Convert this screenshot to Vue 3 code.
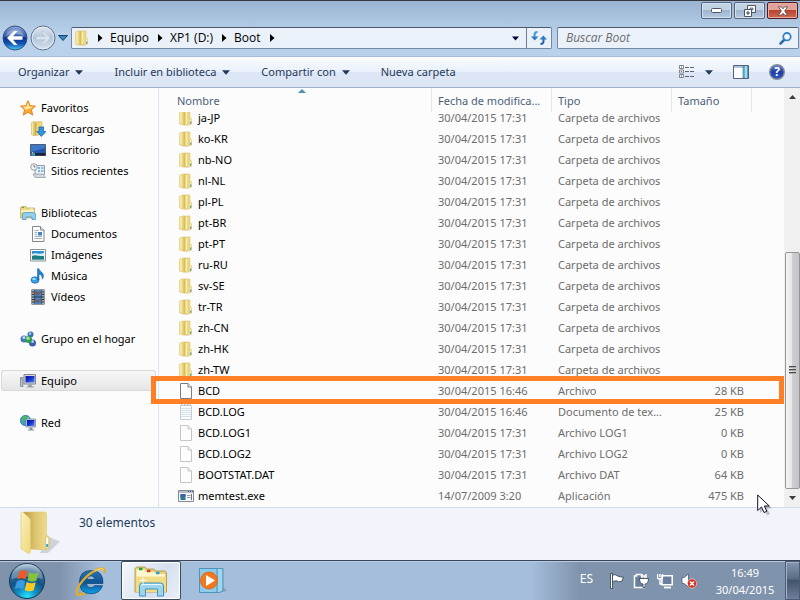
<script setup>
const menu = [
  { label: 'Organizar', drop: true },
  { label: 'Incluir en biblioteca', drop: true },
  { label: 'Compartir con', drop: true },
  { label: 'Nueva carpeta', drop: false },
]
const crumbs = ['Equipo', 'XP1 (D:)', 'Boot']
const groups = [
  { label: 'Favoritos', icon: 'star', items: [
    { label: 'Descargas', icon: 'downloads' },
    { label: 'Escritorio', icon: 'desktop' },
    { label: 'Sitios recientes', icon: 'recent' },
  ] },
  { label: 'Bibliotecas', icon: 'libraries', items: [
    { label: 'Documentos', icon: 'document' },
    { label: 'Imágenes', icon: 'pictures' },
    { label: 'Música', icon: 'music' },
    { label: 'Vídeos', icon: 'video' },
  ] },
  { label: 'Grupo en el hogar', icon: 'homegroup', items: [] },
  { label: 'Equipo', icon: 'computer', items: [], selected: true },
  { label: 'Red', icon: 'network', items: [] },
]
const folders = ['ja-JP', 'ko-KR', 'nb-NO', 'nl-NL', 'pl-PL', 'pt-BR', 'pt-PT', 'ru-RU', 'sv-SE', 'tr-TR', 'zh-CN', 'zh-HK', 'zh-TW']
const rows = [
  ...folders.map((name) => ({ name, icon: 'folder', date: '30/04/2015 17:31', type: 'Carpeta de archivos', size: '' })),
  { name: 'BCD', icon: 'file', solid: true, date: '30/04/2015 16:46', type: 'Archivo', size: '28 KB' },
  { name: 'BCD.LOG', icon: 'textfile', date: '30/04/2015 16:46', type: 'Documento de tex...', size: '25 KB' },
  { name: 'BCD.LOG1', icon: 'file', date: '30/04/2015 17:31', type: 'Archivo LOG1', size: '0 KB' },
  { name: 'BCD.LOG2', icon: 'file', date: '30/04/2015 17:31', type: 'Archivo LOG2', size: '0 KB' },
  { name: 'BOOTSTAT.DAT', icon: 'file', date: '30/04/2015 17:31', type: 'Archivo DAT', size: '64 KB' },
  { name: 'memtest.exe', icon: 'exe', date: '14/07/2009 3:20', type: 'Aplicación', size: '475 KB' },
]
</script>

<template>
  <div class="screen">
    <svg class="sprite" aria-hidden="true">
      <defs>
        <linearGradient id="gFolder" x1="0" x2="1" y1="0" y2="0">
          <stop offset="0" stop-color="#f8eca8" /><stop offset="0.5" stop-color="#e9d175" /><stop offset="1" stop-color="#f3df88" />
        </linearGradient>
        <linearGradient id="gPage" x1="0" x2="1" y1="0" y2="0">
          <stop offset="0" stop-color="#b8923f" /><stop offset="0.45" stop-color="#dcc26c" /><stop offset="1" stop-color="#f3e196" />
        </linearGradient>
        <linearGradient id="gFlap" x1="0" x2="1" y1="0" y2="1">
          <stop offset="0" stop-color="#fbf1bd" /><stop offset="1" stop-color="#efd678" />
        </linearGradient>
        <linearGradient id="gScreen" x1="0" x2="1" y1="0" y2="1">
          <stop offset="0" stop-color="#0710a0" /><stop offset="0.5" stop-color="#1632d0" /><stop offset="1" stop-color="#5e86ee" />
        </linearGradient>
        <linearGradient id="gBack" x1="0" x2="0" y1="0" y2="1">
          <stop offset="0" stop-color="#8fa9d8" /><stop offset="0.45" stop-color="#3259ad" /><stop offset="0.5" stop-color="#0b2f8c" /><stop offset="0.75" stop-color="#1457b8" /><stop offset="1" stop-color="#4fd0f8" />
        </linearGradient>
        <linearGradient id="gFwd" x1="0" x2="0" y1="0" y2="1">
          <stop offset="0" stop-color="#dfe7f1" /><stop offset="0.5" stop-color="#b4c5da" /><stop offset="1" stop-color="#d5e2f0" />
        </linearGradient>
        <radialGradient id="gOrb" cx="0.5" cy="0.95" r="0.9">
          <stop offset="0" stop-color="#25e6ff" /><stop offset="0.3" stop-color="#118fc4" /><stop offset="0.6" stop-color="#155487" /><stop offset="0.85" stop-color="#3c6a92" /><stop offset="1" stop-color="#8fb0c8" />
        </radialGradient>
        <linearGradient id="gIe" x1="0" x2="0" y1="0" y2="1">
          <stop offset="0" stop-color="#2a72b4" /><stop offset="0.5" stop-color="#0d5596" /><stop offset="1" stop-color="#0aa0e8" />
        </linearGradient>
        <linearGradient id="gHelp" x1="0" x2="0" y1="0" y2="1">
          <stop offset="0" stop-color="#5c86d8" /><stop offset="0.5" stop-color="#1b3ea8" /><stop offset="1" stop-color="#2f57c2" />
        </linearGradient>
      </defs>
      <symbol id="i-folder" viewBox="0 0 16 16">
        <path d="M1.500 2.300 4.500 1H12v6.500l1.500 1.500v5l-4 1.300-5-.3-3-1.200z" fill="#e9d47f" stroke="#d8c070" stroke-width=".6" />
        <path d="M1.800 2.500 4.500 1.500v12.800l-2.700-1z" fill="#f5e9a6" />
        <path d="M4.500 1.500h2v12.800l-2 .3z" fill="#e3ca70" />
        <path d="M6.500 1.500h1v13h-1z" fill="#c9ab4c" />
        <path d="M7.500 2.300 9.500 1.200v12.600l-2 1z" fill="#f8eead" />
        <path d="M9.500 1.300H12v6.500l1.300 1.500v4.700l-3.800 1z" fill="#ead480" />
        <path d="M12.600 9.500v2" stroke="#fff8d8" stroke-width="1.200" /><path d="M12.700 11.500v2.300" stroke="#4aa6d8" stroke-width="1.200" />
      </symbol>
      <symbol id="i-file" viewBox="0 0 16 16">
        <path d="M2.500.5h7.500l3.500 3.500v11.500h-11z" fill="#fdfdfd" stroke="currentColor" />
        <path d="M10 .5V4h3.500" fill="#eee" stroke="currentColor" />
      </symbol>
      <symbol id="i-textfile" viewBox="0 0 16 16">
        <path d="M2.500 1.500h11v14h-11z" fill="#fafcfe" stroke="#c9ced3" />
        <path d="M3 4.500h10M3 6.500h10M3 8.500h10M3 10.500h10M3 12.500h10" stroke="#d3e3ee" />
        <path d="M3 1h10" stroke="#bcc4cb" stroke-dasharray="1.500 1.500" stroke-width="2" />
      </symbol>
      <symbol id="i-exe" viewBox="0 0 16 16">
        <path d="M.5 2.500h15v11H.5z" fill="#f6f6f8" stroke="#858b95" />
        <path d="M1 4h14" stroke="#b7bdc8" stroke-width="2" />
        <path d="M10 3.500h1M12 3.500h1M14 3.500h1" stroke="#4d5a78" />
        <path d="M2.500 6h5v6h-5z" fill="#2c7c88" /><path d="M2.500 6h5v2.500l-5 1z" fill="#3e62a6" />
        <path d="M9 7.500h3.500M9 9.500h3.500" stroke="#9aa0aa" /><path d="M13.500 6v6" stroke="#6e7684" />
      </symbol>
      <symbol id="i-star" viewBox="0 0 16 16">
        <path d="M8 .7l2.200 4.900 5.300.5-4 3.600 1.200 5.400L8 12.300l-4.700 2.800 1.200-5.400-4-3.600 5.300-.5z" fill="#f9a834" stroke="#dd7215" stroke-width=".8" />
        <path d="M8 2.500l1.500 4 4 .3-3.500 1.600-5 1.600.5-1L2.500 6.800l3.800-.3z" fill="#ffe49a" />
      </symbol>
      <symbol id="i-downloads" viewBox="0 0 16 16">
        <path d="M1.500 1.500 4 .5v14.500l-2.500-1.500z" fill="#f7eba5" stroke="#cdb154" stroke-width=".6" />
        <path d="M4 .8h8v12l-6 2-2-.5z" fill="url(#gFolder)" stroke="#c9ad50" stroke-width=".6" />
        <path d="M4.500 1.500v13l2-.7v-12z" fill="#cdaf52" />
        <path d="M9 6h4.500v4.500H16L11.300 15.500 6.800 10.500H9z" fill="#3194dc" stroke="#0d5fa6" stroke-width=".7" />
      </symbol>
      <symbol id="i-desktop" viewBox="0 0 16 16">
        <path d="M.5 2.500h15v11H.5z" fill="#2454ac" stroke="#4a5a78" />
        <path d="M1 3h14v3L1 10z" fill="#3b78ca" />
        <path d="M5 11h10.500v2.500H5z" fill="#1c2536" />
        <path d="M1.500 11h3.500v2.500H1.500z" fill="#2fa7c8" />
        <path d="M2 10h1.200v1.200H2z" fill="#f0b43e" />
      </symbol>
      <symbol id="i-recent" viewBox="0 0 16 16">
        <path d="M5 2.500h9.500v9H5z" fill="#edf1f6" stroke="#929ba6" />
        <path d="M3 11h10l2.500 3.500H5z" fill="#d2d8df" stroke="#9097a0" stroke-width=".7" />
        <path d="M8 5h2M8 8h2" stroke="#5c9fd6" stroke-width="1.500" /><path d="M11 5h2.500M11 8h2.500" stroke="#86bce8" stroke-width="2" />
        <circle cx="4" cy="4" r="3.300" fill="#f0f2f4" stroke="#979ea6" /><path d="M4 2v2h1.500" fill="none" stroke="#666" stroke-width=".8" />
      </symbol>
      <symbol id="i-libraries" viewBox="0 0 16 16">
        <path d="M.5 13V2.500L2 1.500h4l1 1.500h7.500v10z" fill="#ecd67f" stroke="#bea04b" stroke-width=".7" />
        <path d="M1 5h13v2H1z" fill="#fbf2bd" /><path d="M2 2.500h2" stroke="#5dae4c" /><path d="M9.500 4h3.500" stroke="#f2faff" />
        <path d="M2.500 14.500V10a2.500 2.500 0 0 1 2.500-2.500h7.500A2.500 2.500 0 0 1 15.500 10v4.500h-3.500V12h-6v2.500z" fill="#94cfed" stroke="#4c9bc6" stroke-width=".8" />
      </symbol>
      <symbol id="i-document" viewBox="0 0 16 16">
        <path d="M2.500.5h8l3.500 3.500v11.500H2.500z" fill="#fdfdfd" stroke="#82898f" />
        <path d="M10.500.5V4H14" fill="#e4e7ea" stroke="#82898f" />
        <path d="M4.500 4.500h4M4.500 6.500h2.500M4.500 8.500h2.500M4.500 10.500h7.500M4.500 12.500h7.500" stroke="#a2acba" />
        <path d="M8 6h4v3.500H8z" fill="#4584c4" />
      </symbol>
      <symbol id="i-pictures" viewBox="0 0 16 16">
        <path d="M.5 2.500h15v11.500H.5z" fill="#fff" stroke="#8a8f95" />
        <path d="M2 4h12v8.500H2z" fill="#2f8fd0" /><path d="M2 7c4-2 6 1 12-1v3H2z" fill="#d7eff7" />
        <path d="M2 9c4-2 8 1 12 0v3.500H2z" fill="#1e7f83" />
      </symbol>
      <symbol id="i-music" viewBox="0 0 16 16">
        <ellipse cx="5" cy="12" rx="4" ry="3.200" fill="#3a9fe4" stroke="#1369ad" stroke-width=".7" />
        <path d="M7.500 12V.8h1.500c.5 2.800 4.500 3.500 4.500 7 0 1.500-.7 2.700-1.500 3.400.7-2.800-.7-4.500-3-5V12z" fill="#2080cb" stroke="#125f9f" stroke-width=".5" />
        <ellipse cx="4" cy="11" rx="1.800" ry="1" fill="#a9dcfa" />
      </symbol>
      <symbol id="i-video" viewBox="0 0 16 16">
        <path d="M1.500.5h13v15h-13z" fill="#2b323b" />
        <path d="M4.500 1h7v6.500h-7zM4.500 8.500h7V15h-7z" fill="#3f8ed2" />
        <path d="M4.500 1 8 3l3.500-1v2L8 7 4.500 5zM4.500 9 8 11l3.500-1.500v2L8 14.500l-3.500-2z" fill="#8d4a3e" opacity=".7" />
        <path d="M3 1v14M13 1v14" stroke="#e9eef2" stroke-width="1.300" stroke-dasharray="1.500 1" />
      </symbol>
      <symbol id="i-homegroup" viewBox="0 0 16 16">
        <circle cx="4" cy="8" r="3.500" fill="#4b74c6" /><circle cx="10.500" cy="3.500" r="3" fill="#3f6cb8" /><circle cx="12.500" cy="12" r="3.500" fill="#3c5eb0" />
        <circle cx="4" cy="6.500" r="1.600" fill="#bdd4f2" /><circle cx="10" cy="2.700" r="1.400" fill="#8ccad2" /><circle cx="12.500" cy="10.500" r="1.500" fill="#b7ccee" />
        <circle cx="8.500" cy="8.500" r="3.500" fill="#2f9f4a" /><circle cx="8" cy="7.300" r="1.700" fill="#a2e29a" />
      </symbol>
      <symbol id="i-computer" viewBox="0 0 16 16">
        <path d="M.5 4.500h2.500v9H.5z" fill="#b9c0c5" stroke="#7d858b" stroke-width=".8" /><path d="M1 6h1.500" stroke="#50c050" />
        <path d="M4 1.500h11.500v9.500H4z" fill="#d5d9dd" stroke="#83898e" />
        <path d="M5.500 3h9v6.500h-9z" fill="url(#gScreen)" />
        <path d="M8 11.500h4v2H8zM6.500 13.500h7.500v1H6.500z" fill="#9aa2a8" />
      </symbol>
      <symbol id="i-network" viewBox="0 0 16 16">
        <circle cx="5.500" cy="5.500" r="5.200" fill="#3d9bd8" stroke="#1d5f9a" stroke-width=".6" />
        <path d="M2 2.500c2-2 4-1.500 5-1l-2 3-2 1.500 1 3-2-1.500z" fill="#4cbc4e" /><path d="M7 2l2.500 1-1 2z" fill="#a9e6ac" />
        <path d="M6 4h9.500v8H6z" fill="#d3dbe4" stroke="#7a8794" stroke-width=".8" /><path d="M7 5h7.500v6H7z" fill="url(#gScreen)" />
        <path d="M9.500 12.500h3v2h-3zM8 14.500h6v1H8z" fill="#87929c" />
      </symbol>
    </svg>

    <main class="window">
      <div class="frame">
        <div class="caption">
          <button class="cap" aria-label="Minimizar">
            <svg width="12" height="7"><rect x=".5" y="1.500" width="10" height="4" rx="1" fill="#fff" stroke="#4c5564" /></svg>
          </button>
          <button class="cap" aria-label="Restaurar">
            <svg width="14" height="12"><path d="M4.500.5h8v7h-8z" fill="#fff" stroke="#4c5564" /><path d="M7 3h3v2H7z" fill="#a9bbd2" stroke="#4c5564" stroke-width=".7" /><path d="M1.500 4.500h7v7h-7z" fill="#fff" stroke="#4c5564" /><path d="M4 7h2v2H4z" fill="#a9bbd2" stroke="#4c5564" /></svg>
          </button>
          <button class="cap close" aria-label="Cerrar">
            <svg width="12" height="10" viewBox="0 0 14 12"><path d="M1.500 1h3.500l2 2.300L9 1h3.500L9 6l3.500 5H9L7 8.700 5 11H1.500L5 6z" fill="#fff" stroke="#54454a" /></svg>
          </button>
        </div>
        <div class="navbar">
          <div class="nav">
            <button class="plain" aria-label="Atrás">
              <svg width="26" height="26" viewBox="0 0 26 26"><circle cx="13" cy="13" r="12" fill="url(#gBack)" stroke="#34507e" /><path d="M4 11a9.500 9.500 0 0 1 18 0q-9-4-18 0z" fill="#fff" opacity=".3" /><path d="M5 13 12 6h3.500L11 11.200H20.500v3.600H11L15.500 20H12z" fill="#fff" /></svg>
            </button>
            <button class="plain" aria-label="Adelante">
              <svg width="26" height="26" viewBox="0 0 26 26"><circle cx="13" cy="13" r="12" fill="url(#gFwd)" stroke="#60738c" /><circle cx="13" cy="13" r="10.800" fill="none" stroke="#e8eff7" opacity=".7" /><path d="M20.500 13 14 6.500h-3l4.300 4.800H6v3.400h9.300L11 19.500h3z" fill="#d9e3ee" stroke="#b3c2d3" stroke-width=".6" /></svg>
            </button>
            <button class="plain" aria-label="Páginas recientes">
              <svg width="10" height="6"><path d="M.5.500h9L5 5.500z" fill="#2f87bd" stroke="#1b3f70" /></svg>
            </button>
          </div>
          <div class="address">
            <svg class="ico" width="16" height="16"><use href="#i-folder" /></svg>
            <template v-for="c in crumbs" :key="c">
              <svg class="tri" width="5" height="8"><path d="M0 0v8l4.500-4z" fill="#000" /></svg>
              <button class="plain crumb">{{ c }}</button>
            </template>
            <svg class="tri" width="5" height="8"><path d="M0 0v8l4.500-4z" fill="#000" /></svg>
            <button class="plain addrdrop" aria-label="Ubicaciones anteriores"><svg width="8" height="5"><path d="M0 .5h7L3.500 4.500z" fill="#00003c" /></svg></button>
            <button class="plain refresh" aria-label="Actualizar">
              <svg width="16" height="14" viewBox="0 0 16 14"><path d="M6.500 1Q3.500 1 3.500 4V6" fill="none" stroke="#3f9ad8" stroke-width="2" /><path d="M0 5.500h7.500L3.700 9.500z" fill="#2f7cc6" /><path d="M9.500 13q3 0 3-3V8" fill="none" stroke="#2566a8" stroke-width="2" /><path d="M8.500 8.500H16L12.300 4.500z" fill="#2f7cc6" /></svg>
            </button>
          </div>
          <label class="search">
            <input type="text" placeholder="Buscar Boot" aria-label="Buscar Boot" />
            <svg width="13" height="13" viewBox="0 0 13 13"><path d="M1.500 11.500 5 8" stroke="#2c6cae" stroke-width="2.500" stroke-linecap="round" /><circle cx="8" cy="4.700" r="3.700" fill="#f3faff" stroke="#3581c4" stroke-width="1.800" /></svg>
          </label>
        </div>
      </div>

      <div class="toolbar">
        <button v-for="m in menu" :key="m.label" class="plain tool">
          {{ m.label }}
          <svg v-if="m.drop" width="8" height="5"><path d="M0 .3h8L4 4.800z" fill="#1e395b" /></svg>
        </button>
        <div class="right">
          <button class="plain view" aria-label="Cambiar la vista">
            <svg width="16" height="14" viewBox="0 0 16 14"><path d="M.5.500h4v3h-4zM.5 5h4v3h-4zM.5 9.500h4v3h-4z" fill="#fff" stroke="#7a8390" /><path d="M2 2h1M2 11h1" stroke="#556" /><path d="M2 6.500h1" stroke="#d33" /><path d="M6 2.500h4M11 2.500h4M6 6.500h4M11 6.500h4M6 11.500h4M11 11.500h4" stroke="#5a6472" /></svg>
            <svg width="8" height="5"><path d="M0 .3h8L4 4.800z" fill="#1e395b" /></svg>
          </button>
          <button class="plain" aria-label="Mostrar el panel de vista previa">
            <svg width="16" height="14" viewBox="0 0 16 14"><path d="M.5.500h15v13H.5z" fill="#fff" stroke="#4f6280" /><path d="M1 2h9" stroke="#b5c2d8" stroke-width="2" /><path d="M10 1h5v12h-5z" fill="#5bbbd8" stroke="#4f6280" stroke-width=".6" /><path d="M12 1h2v12h-2z" fill="#9be0ee" /></svg>
          </button>
          <button class="plain" aria-label="Obtener ayuda">
            <svg width="16" height="16" viewBox="0 0 16 16"><circle cx="8" cy="8" r="7.300" fill="url(#gHelp)" stroke="#8a8d92" stroke-width="1.400" /><text x="8" y="12" text-anchor="middle" class="q">?</text></svg>
          </button>
        </div>
      </div>

      <div class="content">
        <nav class="sidebar" aria-label="Panel de navegación">
          <ul v-for="g in groups" :key="g.label">
            <li :class="{ selected: g.selected }"><a href="#"><svg class="ico" width="16" height="16"><use :href="'#i-' + g.icon" /></svg>{{ g.label }}</a></li>
            <li v-for="i in g.items" :key="i.label" class="child"><a href="#"><svg class="ico" width="16" height="16"><use :href="'#i-' + i.icon" /></svg>{{ i.label }}</a></li>
          </ul>
        </nav>

        <table class="files">
          <thead>
            <tr class="cols">
              <th>Nombre<svg class="sort" width="8" height="4"><path d="M4 0l4 4H0z" fill="#4f8fb0" /></svg></th>
              <th>Fecha de modifica...</th>
              <th>Tipo</th>
              <th>Tamaño</th>
            </tr>
          </thead>
          <tbody>
            <tr v-for="r in rows" :key="r.name" class="cols">
              <td class="name"><svg class="ico" :class="{ solid: r.solid }" width="16" height="16"><use :href="'#i-' + r.icon" /></svg>{{ r.name }}</td>
              <td>{{ r.date }}</td>
              <td>{{ r.type }}</td>
              <td class="size">{{ r.size }}</td>
            </tr>
          </tbody>
        </table>

        <div class="scroll">
          <button class="plain" aria-label="Subir"><svg width="7" height="4"><path d="M3.500 0L7 4H0z" fill="#3c3c3c" /></svg></button>
          <div class="track"><div class="thumb"><i></i><i></i><i></i></div></div>
          <button class="plain" aria-label="Bajar"><svg width="7" height="4"><path d="M0 0h7L3.500 4z" fill="#3c3c3c" /></svg></button>
        </div>
        <div class="highlight"></div>
        <svg class="cursor" width="17" height="22" viewBox="0 0 17 22"><path d="M3 3v16l4-3.500 3 6 3-1.500-3-5.500h5z" fill="#000" opacity=".22" /><path d="M.7 1v15.500l3.800-3.500 2.500 5.500 2.800-1.200-2.500-5.300h5z" fill="#fff" stroke="#101428" /></svg>
      </div>

      <footer class="details">
        <svg width="42" height="46" viewBox="0 0 42 46">
          <path d="M20 42 28 42 40 30.500 29 26z" fill="#7d828c" opacity=".3" />
          <path d="M3 1H25q1.500 0 1.500 1.500V24l2.500 2.500V37l-5 2-15-1z" fill="url(#gPage)" stroke="#dcc677" stroke-width=".6" />
          <path d="M25.500 27q0-2 1.700-2t1.700 2v10l-3.400 1.300z" fill="#f6e8a8" stroke="#cfb45f" stroke-width=".6" />
          <path d="M27.200 27v6" stroke="#fff" stroke-width="1.800" /><path d="M27.200 33v3" stroke="#379fe0" stroke-width="1.800" />
          <path d="M1 2.500Q1 .5 3.500 1.500L9 6.500q1.500 1.500 1.500 3.500v31q-1 2.500-3.500.7L1 37.500z" fill="url(#gFlap)" stroke="#dfca7c" stroke-width=".7" />
        </svg>
        <span>30 elementos</span>
      </footer>
    </main>

    <div class="taskbar">
      <button class="plain start" aria-label="Iniciar">
        <svg width="38" height="38" viewBox="0 0 38 38">
          <circle cx="19" cy="19" r="17.500" fill="url(#gOrb)" stroke="#16354f" />
          <path d="M3.500 17a15.500 15.500 0 0 1 31 0q-15-5-31 0z" fill="#fff" opacity=".28" />
          <path d="M11.500 9.500q4-2.500 8 0l-2 8q-4-2.500-8.200 0z" fill="#ee5a26" />
          <path d="M21 10.300q4.500 2.700 9.500.3l-2 8q-4.500 2.200-9-.3z" fill="#86c23a" />
          <path d="M8.800 19.200q4.200-2.500 8.200 0l-2 8q-4-2.500-8.200 0z" fill="#3c9be0" />
          <path d="M18.700 20q4.500 2.500 9 .3l-2 8q-4.500 2.200-9-.3z" fill="#fcc822" />
        </svg>
      </button>
      <button class="plain app" aria-label="Internet Explorer">
        <svg width="34" height="34" viewBox="0 0 34 34">
          <path d="M29 19.500H12.500q.5 4.200 4.500 4.200 2.500 0 3.500-2h8q-2.500 8-11.500 8-11.500 0-11.500-11.500T17 6.500q12.500 0 12 13zM12.700 15.500h8q-.5-3.700-3.800-3.700-3.500 0-4.200 3.700z" fill="url(#gIe)" stroke="#0b3f73" stroke-width=".7" />
          <path d="M30.500 9c1.500-5-3-6-9-2.500C12 11 3 22 2.700 28c0 4 4 3.500 8 1" fill="none" stroke="#e7ab1e" stroke-width="2.200" />
          <path d="M30 6c-1-2-5-1.500-9 1" fill="none" stroke="#ffe27a" />
        </svg>
      </button>
      <button class="plain app active" aria-label="Explorador de Windows">
        <svg width="34" height="32" viewBox="0 0 34 32">
          <path d="M1 27V3.500L3 2h8l1.500 2H20l1.500 2H31l1.500 2v19z" fill="#e9d27b" stroke="#ad8f3f" stroke-width=".8" />
          <path d="M2.500 4.500h8L12 7h8l2 2h9V12H2.500z" fill="#fff8cf" />
          <path d="M5 4h3.500" stroke="#17a83a" stroke-width="2.500" /><path d="M13 6h3.500" stroke="#d33a22" stroke-width="2.500" /><path d="M22 8h3.500" stroke="#2d9fd8" stroke-width="2.500" />
          <path d="M2 11.500h30V27H2z" fill="#f1dc88" />
          <path d="M5.500 31V21q0-3 3-3h18q3 0 3 3v10h-6v-7h-12v7z" fill="#9cd6ee" stroke="#4293bb" />
          <path d="M7 21q0-1.500 2-1.500h17q2 0 2 1.500" fill="none" stroke="#e8f8ff" />
          <path d="M9 12v7M5.500 15.500h7" stroke="#fff" opacity=".9" />
        </svg>
      </button>
      <button class="plain app" aria-label="Reproductor de Windows Media">
        <svg width="32" height="28" viewBox="-3 0 32 28">
          <path d="M24 25l5-1-4-4z" fill="#56708f" opacity=".4" />
          <path d="M10 1.500h15v22l-3 2H10z" fill="#7ec2e2" stroke="#4f98c2" /><path d="M21 2v23M23 2v22" stroke="#c6e9f6" />
          <path d="M1.500 1.500h17.500v24H1.500z" fill="#8ecbe8" stroke="#4b94c0" />
          <circle cx="11" cy="13.500" r="8.500" fill="#f4771d" stroke="#d85a0c" stroke-width=".7" />
          <path d="M8 8v11l9-5.500z" fill="#fff" />
        </svg>
      </button>
      <div class="tray">
        <span class="lang">ES</span>
        <svg width="16" height="16" viewBox="0 0 16 16"><path d="M1.500.500h2v15h-2z" fill="#fff" stroke="#2c3b52" stroke-width=".8" /><path d="M3.500 2q3-1 5 1l6 1.500-2 4q-3 1-5-.8l-4 .8z" fill="#fff" stroke="#2c3b52" stroke-width=".8" /></svg>
        <svg width="16" height="16" viewBox="0 0 16 16"><path d="M3.500 1.500h5v1.500h3v11.500h-10V3h2z" fill="#6a7f9c" stroke="#fff" stroke-width="1.500" /><path d="M9 1v4M13 1v4" stroke="#fff" stroke-width="1.500" /><path d="M6.500 5.500h9q0 5-3.500 5.500v3.500h-2V11q-3.500-.5-3.500-5.500z" fill="#fff" stroke="#2c3b52" stroke-width=".8" /></svg>
        <svg width="16" height="16" viewBox="0 0 16 16"><path d="M5 2.800h10.200v9H5z" fill="#6a7f9c" stroke="#fff" stroke-width="1.500" /><path d="M7 14.500h7" stroke="#fff" stroke-width="1.800" /><path d="M.5 1v3.500q0 1.500 2.500 1.500v5h2M5.500 1v3.500Q5.500 6 3 6M3 1v3" fill="none" stroke="#fff" stroke-width="1.400" /></svg>
        <svg width="16" height="16" viewBox="0 0 16 16"><path d="M1 4.500h2L7.500 1v13L3 10.500H1z" fill="#fff" stroke="#4b5b72" stroke-width=".8" /><circle cx="11" cy="10.500" r="4.600" fill="#d92b1c" stroke="#fff" stroke-width=".5" /><path d="M9 8.500l4 4M13 8.500l-4 4" stroke="#fff" stroke-width="1.600" /></svg>
        <div class="clock"><span>16:49</span><span>30/04/2015</span></div>
      </div>
      <button class="plain peek" aria-label="Mostrar escritorio"></button>
    </div>
  </div>
</template>

<style>
body {
  margin: 0;
}
</style>

<style scoped>
.screen {
  display: flex;
  flex-direction: column;
  height: 100vh;
  overflow: hidden;
  font: 11px/20px "Noto Sans", "Open Sans", sans-serif;
  color: #000;
}
.sprite {
  position: absolute;
  width: 0;
  height: 0;
}
svg {
  flex: none;
  display: block;
}
.plain {
  border: 0;
  padding: 0;
  background: none;
  font: inherit;
  color: inherit;
  display: flex;
  align-items: center;
  justify-content: center;
}
.window {
  flex: 1;
  min-height: 0;
  display: flex;
  flex-direction: column;
}
.frame {
  border-top: 1px solid #36383e;
  padding-top: 1px;
  background: linear-gradient(#99b4d2, #b9d1ea 60%, #b9d1ea);
  border-bottom: 1px solid #a5bcd8;
}
.caption {
  display: flex;
  justify-content: flex-end;
  gap: 2px;
  padding: 0 2px;
  height: 23px;
}
.cap {
  width: 31px;
  height: 17px;
  padding: 0;
  display: flex;
  align-items: center;
  justify-content: center;
  border: 1px solid #56657b;
  border-radius: 2px;
  box-shadow: inset 0 0 0 1px #d3e0ef;
  background: linear-gradient(#c3d3e6 48%, #9fb5d0 50%, #b6cae1);
}
.cap.close {
  border-color: #4e1d24;
  box-shadow: inset 0 0 0 1px #e8aea4;
  background: linear-gradient(#e3a297 45%, #bb4430 50%, #cd6a50);
}
.navbar {
  display: flex;
  align-items: center;
  gap: 5px;
  padding: 0 1px 5px 2px;
}
.nav {
  display: flex;
  align-items: center;
  gap: 2px;
  width: 64px;
}
.address,
.search {
  display: flex;
  align-items: center;
  box-sizing: border-box;
  height: 22px;
  border: 1px solid #7288a3;
  border-top-color: #4b5a6b;
  border-radius: 2px;
  background: #eaf1f9;
  font: 12px/20px "Open Sans", "Noto Sans", sans-serif;
}
.address {
  flex: 1;
  padding-left: 2px;
}
.crumb {
  margin: 0 8px 0 7px;
}
.tri {
  margin-left: 1px;
}
.ico + .tri {
  margin-left: 8px;
}
.addrdrop {
  margin-left: auto;
  width: 20px;
}
.refresh {
  width: 25px;
  height: 20px;
  border-left: 1px solid #6f7f92;
}
.search {
  width: 242px;
  padding: 0 6px 0 8px;
}
.search input {
  flex: 1;
  min-width: 0;
  border: 0;
  padding: 0;
  outline: 0;
  background: none;
  font: italic 12px/20px "Open Sans", "Noto Sans", sans-serif;
}
.search input::placeholder {
  color: #6d6d6d;
  opacity: 1;
}
.toolbar {
  display: flex;
  align-items: center;
  gap: 31px;
  height: 30px;
  padding: 0 15px 0 18px;
  border-bottom: 1px solid #9fb0cd;
  background: linear-gradient(#fafcff, #eaf1fa 48%, #dce6f4 52%, #dce6f4);
  color: #1e395b;
}
.tool {
  gap: 6px;
}
.right {
  display: flex;
  align-items: center;
  gap: 20px;
  margin-left: auto;
}
.view {
  gap: 10px;
}
.q {
  font: bold 12px "Open Sans", sans-serif;
  fill: #fff;
}
.content {
  position: relative;
  flex: 1;
  min-height: 0;
  display: flex;
  background: #fcfcfc;
}
.sidebar {
  box-sizing: border-box;
  flex: none;
  width: 159px;
  padding: 9px 2px 0 1px;
  border-right: 1px solid #d6e5f5;
}
.sidebar ul {
  list-style: none;
  margin: 0 0 21px;
  padding: 0;
}
.sidebar a {
  display: flex;
  align-items: center;
  gap: 5px;
  height: 21px;
  padding-left: 19px;
  color: #000;
  text-decoration: none;
}
.sidebar .child a {
  padding-left: 29px;
}
.sidebar .selected {
  border-radius: 3px;
  box-shadow: inset 0 0 0 1px #d9d9d9;
  background: linear-gradient(#f8f8f8, #e5e5e5);
}
.files {
  flex: 1;
  min-width: 0;
  display: flex;
  flex-direction: column;
}
.cols {
  display: grid;
  grid-template-columns: minmax(0, 1fr) 120px 120px 80px 32px;
}
thead {
  display: block;
  flex: none;
}
th {
  position: relative;
  height: 24px;
  padding: 3px 0 1px 6px;
  box-sizing: border-box;
  text-align: left;
  font-weight: 400;
  color: #4c607a;
  white-space: nowrap;
  border-right: 1px solid #e0e9f3;
}
th:first-child {
  padding-left: 18px;
}
.sort {
  position: absolute;
  top: 1px;
  left: 51%;
}
tbody {
  flex: 1;
  min-height: 0;
  display: flex;
  flex-direction: column;
  justify-content: flex-end;
  overflow: hidden;
  padding-bottom: 1px;
}
tbody tr {
  flex: none;
  height: 21px;
}
td {
  padding: 0 0 0 6px;
  line-height: 21px;
  color: #6d6d6d;
  white-space: nowrap;
}
.name {
  display: flex;
  align-items: center;
  gap: 4px;
  padding-left: 19px;
  color: #000;
}
.name .ico {
  color: #c6c6c6;
}
.name .ico.solid {
  color: #7c7c7c;
}
.size {
  text-align: right;
  padding-right: 8px;
}
.scroll {
  flex: none;
  width: 16px;
  display: flex;
  flex-direction: column;
  background: #f0f0f0;
}
.scroll button {
  height: 18px;
}
.track {
  flex: 1;
  display: flex;
  flex-direction: column;
  justify-content: flex-end;
}
.thumb {
  box-sizing: border-box;
  height: 62%;
  margin-left: 1px;
  display: flex;
  flex-direction: column;
  align-items: center;
  justify-content: center;
  gap: 1px;
  border: 1px solid #979797;
  border-radius: 2px;
  background: linear-gradient(90deg, #f4f4f4, #e6e6e6 45%, #cfcfd1 50%, #c3c4c8);
}
.thumb i {
  width: 7px;
  height: 2px;
  background: linear-gradient(#4a4a4a 50%, #aaa 50%);
}
.highlight {
  position: absolute;
  left: 151px;
  right: 16px;
  bottom: 103px;
  height: 28px;
  box-sizing: border-box;
  border: 5px solid #ff7f27;
}
.cursor {
  position: absolute;
  right: 26px;
  bottom: -9px;
  z-index: 1;
}
.details {
  display: flex;
  align-items: flex-start;
  gap: 17px;
  height: 49px;
  padding: 3px 0 0 20px;
  border-top: 1px solid #cfdcec;
  background: #f1f5fb;
  font-size: 12px;
  color: #1e395b;
}
.details span {
  padding-top: 2px;
}
.taskbar {
  display: flex;
  align-items: stretch;
  height: 39px;
  border-top: 1px solid #3a4558;
  box-shadow: inset 0 1px #b9cbe2;
  background: linear-gradient(90deg, #8093ac, #8093ac 60px, #a5bedc 100px, #a5bedc calc(100% - 270px), #8093ac calc(100% - 220px));
}
.start {
  width: 54px;
}
.app {
  width: 60px;
  margin-left: 7px;
}
.app + .app {
  margin-left: 0;
}
.active {
  box-sizing: border-box;
  border: 1px solid #3c4a5e;
  border-radius: 2px;
  box-shadow: inset 0 0 0 1px #fff;
  background: linear-gradient(120deg, #f4f8fc, #d5e0ee 60%, #e9f0f8);
}
.tray {
  display: flex;
  align-items: center;
  gap: 8px;
  margin-left: auto;
  color: #fff;
}
.lang {
  margin-right: 8px;
  padding-bottom: 4px;
  font-size: 12px;
}
.clock {
  display: flex;
  flex-direction: column;
  align-items: center;
  width: 80px;
  line-height: 17px;
}
.peek {
  width: 15px;
  border: 1px solid #4c5c74;
  box-shadow: inset 1px 1px #a2b2c8;
  background: linear-gradient(#8496b0, #5a6b85 45%, #44546d 50%, #6c7e99);
}
</style>
